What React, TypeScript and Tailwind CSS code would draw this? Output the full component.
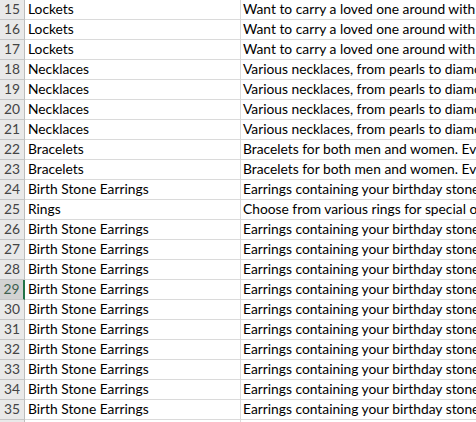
const rows: [number, string, string][] = [
  [15, "Lockets", "Want to carry a loved one around with you? Lockets are a timeless gift."],
  [16, "Lockets", "Want to carry a loved one around with you? Lockets are a timeless gift."],
  [17, "Lockets", "Want to carry a loved one around with you? Lockets are a timeless gift."],
  [18, "Necklaces", "Various necklaces, from pearls to diamonds, for every occasion."],
  [19, "Necklaces", "Various necklaces, from pearls to diamonds, for every occasion."],
  [20, "Necklaces", "Various necklaces, from pearls to diamonds, for every occasion."],
  [21, "Necklaces", "Various necklaces, from pearls to diamonds, for every occasion."],
  [22, "Bracelets", "Bracelets for both men and women. Every style and size."],
  [23, "Bracelets", "Bracelets for both men and women. Every style and size."],
  [24, "Birth Stone Earrings", "Earrings containing your birthday stone."],
  [25, "Rings", "Choose from various rings for special occasions."],
  [26, "Birth Stone Earrings", "Earrings containing your birthday stone."],
  [27, "Birth Stone Earrings", "Earrings containing your birthday stone."],
  [28, "Birth Stone Earrings", "Earrings containing your birthday stone."],
  [29, "Birth Stone Earrings", "Earrings containing your birthday stone."],
  [30, "Birth Stone Earrings", "Earrings containing your birthday stone."],
  [31, "Birth Stone Earrings", "Earrings containing your birthday stone."],
  [32, "Birth Stone Earrings", "Earrings containing your birthday stone."],
  [33, "Birth Stone Earrings", "Earrings containing your birthday stone."],
  [34, "Birth Stone Earrings", "Earrings containing your birthday stone."],
  [35, "Birth Stone Earrings", "Earrings containing your birthday stone."],
];

export default function App() {
  return (
    <div
      className="w-[476px] h-[422px] overflow-hidden bg-white text-[13.8px] leading-[18px] text-black"
      style={{ fontFamily: "Lato, 'Open Sans', sans-serif" }}
    >
      {rows.map(([n, name, desc]) => {
        const selected = n === 29;
        return (
          <div key={n} className="flex h-5 whitespace-nowrap">
            {/* row header */}
            <div
              className={
                selected
                  ? "w-[25px] shrink-0 flex items-end justify-center pb-[1px] bg-[#d2d2d2] text-[#3f5f4f] border-b border-[#c6c6c6] border-r-2 border-r-[#217346]"
                  : "w-[25px] shrink-0 flex items-end justify-center pb-[1px] bg-[#e9e9e9] text-[#444] border-b border-[#c6c6c6] border-r border-r-[#bdbdbd]"
              }
            >
              {n}
            </div>
            <div className="w-[216px] shrink-0 flex items-end pl-[3px] pb-[1px] border-b border-r border-[#dadada] overflow-hidden">
              {name}
            </div>
            <div className="flex-1 min-w-0 flex items-end pl-[2px] pb-[1px] border-b border-[#dadada] overflow-hidden">
              {desc}
            </div>
          </div>
        );
      })}
      {/* partial row 36 */}
      <div className="flex h-5">
        <div className="w-[25px] shrink-0 bg-[#e9e9e9] border-r border-r-[#bdbdbd]" />
        <div className="w-[216px] shrink-0 border-r border-[#dadada]" />
        <div className="flex-1" />
      </div>
    </div>
  );
}
